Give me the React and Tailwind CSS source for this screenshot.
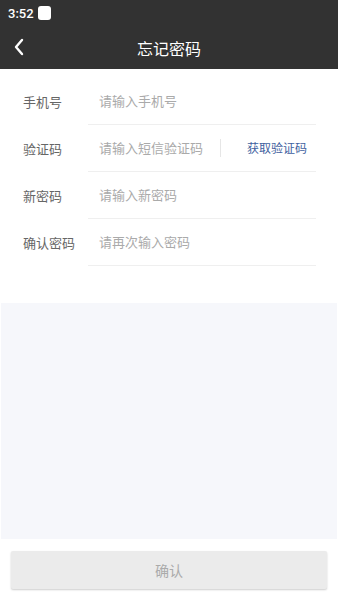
import React from 'react';

const rows = [
  { label: '手机号', placeholder: '请输入手机号' },
  { label: '验证码', placeholder: '请输入短信验证码', code: true },
  { label: '新密码', placeholder: '请输入新密码' },
  { label: '确认密码', placeholder: '请再次输入密码' },
];

const font = { fontFamily: '"Noto Sans CJK SC", "Noto Sans", sans-serif' };

export default function App() {
  return (
    <div className="w-[338px] h-[600px] flex flex-col bg-white overflow-hidden" style={font}>
      {/* status bar */}
      <div className="h-[26px] bg-[#323232] flex items-center pl-[8px] gap-[4px]">
        <span className="text-white text-[13px] font-medium leading-none" style={{ fontFamily: 'Roboto, sans-serif' }}>3:52</span>
        <span className="w-[13px] h-[14px] bg-white rounded-[3px]" />
      </div>

      {/* app bar */}
      <div className="relative h-[43px] bg-[#323232] flex items-center justify-center">
        <button className="absolute left-[12px] top-[11px] text-white">
          <svg width="14" height="20" viewBox="0 0 14 20" fill="none">
            <path d="M10 3 L4 10 L10 17" stroke="white" strokeWidth="2.4" strokeLinecap="round" strokeLinejoin="round" />
          </svg>
        </button>
        <h1 className="text-white text-[16px] leading-none">忘记密码</h1>
      </div>

      {/* form */}
      <div className="bg-white pt-[9px] h-[234px]">
        {rows.map((r) => (
          <div key={r.label} className="flex h-[47px] items-center">
            <div className="w-[88px] pl-[23px] text-[13px] text-[#666]">{r.label}</div>
            <div className="flex-1 mr-[22px] h-full flex items-center border-b border-[#efefef]">
              <input
                className="flex-1 min-w-0 pl-[11px] text-[13px] text-[#333] placeholder-[#aaa] outline-none bg-transparent"
                placeholder={r.placeholder}
              />
              {r.code && (
                <>
                  <span className="w-px h-[18px] bg-[#e6e6e6]" />
                  <button className="pl-[26px] pr-[9px] text-[12px] text-[#3f5fa0]">获取验证码</button>
                </>
              )}
            </div>
          </div>
        ))}
      </div>

      {/* blank area */}
      <div className="flex-1 bg-[#f6f7fb] mx-px" />

      {/* footer */}
      <div className="h-[61px] bg-white px-[11px] pt-[12px]">
        <button className="w-full h-[38px] bg-[#ebebeb] rounded-[2px] shadow-[0_1px_2px_rgba(0,0,0,0.2)] text-[14px] text-[#aaa]">
          确认
        </button>
      </div>
    </div>
  );
}
